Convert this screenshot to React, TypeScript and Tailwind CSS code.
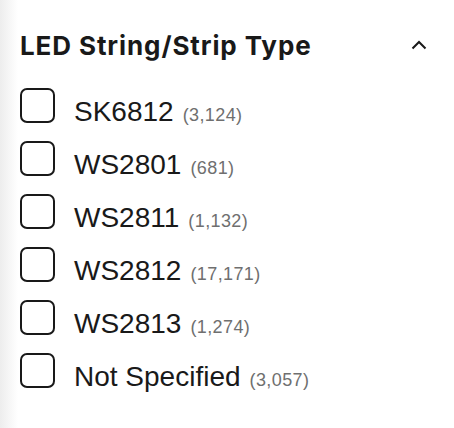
import { useState } from "react";

const OPTIONS = [
  { label: "SK6812", count: "3,124" },
  { label: "WS2801", count: "681" },
  { label: "WS2811", count: "1,132" },
  { label: "WS2812", count: "17,171" },
  { label: "WS2813", count: "1,274" },
  { label: "Not Specified", count: "3,057" },
];

export default function App() {
  const [open, setOpen] = useState(true);
  const [checked, setChecked] = useState<Record<string, boolean>>({});

  return (
    <div className="w-[454px] h-[428px] bg-[linear-gradient(to_right,#ededed_0px,#ffffff_18px)] pl-5 pt-6 text-[#191919] font-['Liberation_Sans',Arial,sans-serif]">
      <div className="flex items-center justify-between h-[42px] pr-[27px]">
        <h3 className="font-['Inter',sans-serif] text-[26px] leading-none font-bold tracking-[0.9px] pt-[1px]">
          LED String/Strip Type
        </h3>
        <button onClick={() => setOpen(!open)} className="w-4 h-4 flex items-center justify-center">
          <svg width="16" height="10" viewBox="0 0 16 10" fill="none">
            <path d="M1.5 8.5L8 2L14.5 8.5" stroke="#191919" strokeWidth="2" />
          </svg>
        </button>
      </div>

      {open && (
        <ul className="mt-[22px] flex flex-col gap-[18px]">
          {OPTIONS.map((o) => (
            <li key={o.label}>
              <label className="flex items-start h-[35px] cursor-pointer">
                <span
                  onClick={() => setChecked((p) => ({ ...p, [o.label]: !p[o.label] }))}
                  className="w-[35px] h-[35px] rounded-[7px] border-2 border-[#191919] bg-white shrink-0"
                />
                <span className="ml-[19px] mt-[10px] text-[28px] leading-none">{o.label}</span>
                <span className="ml-[9px] mt-[18px] text-[18px] leading-none text-[#6f6f6f] tracking-[0.4px]">
                  ({o.count})
                </span>
              </label>
            </li>
          ))}
        </ul>
      )}
    </div>
  );
}
